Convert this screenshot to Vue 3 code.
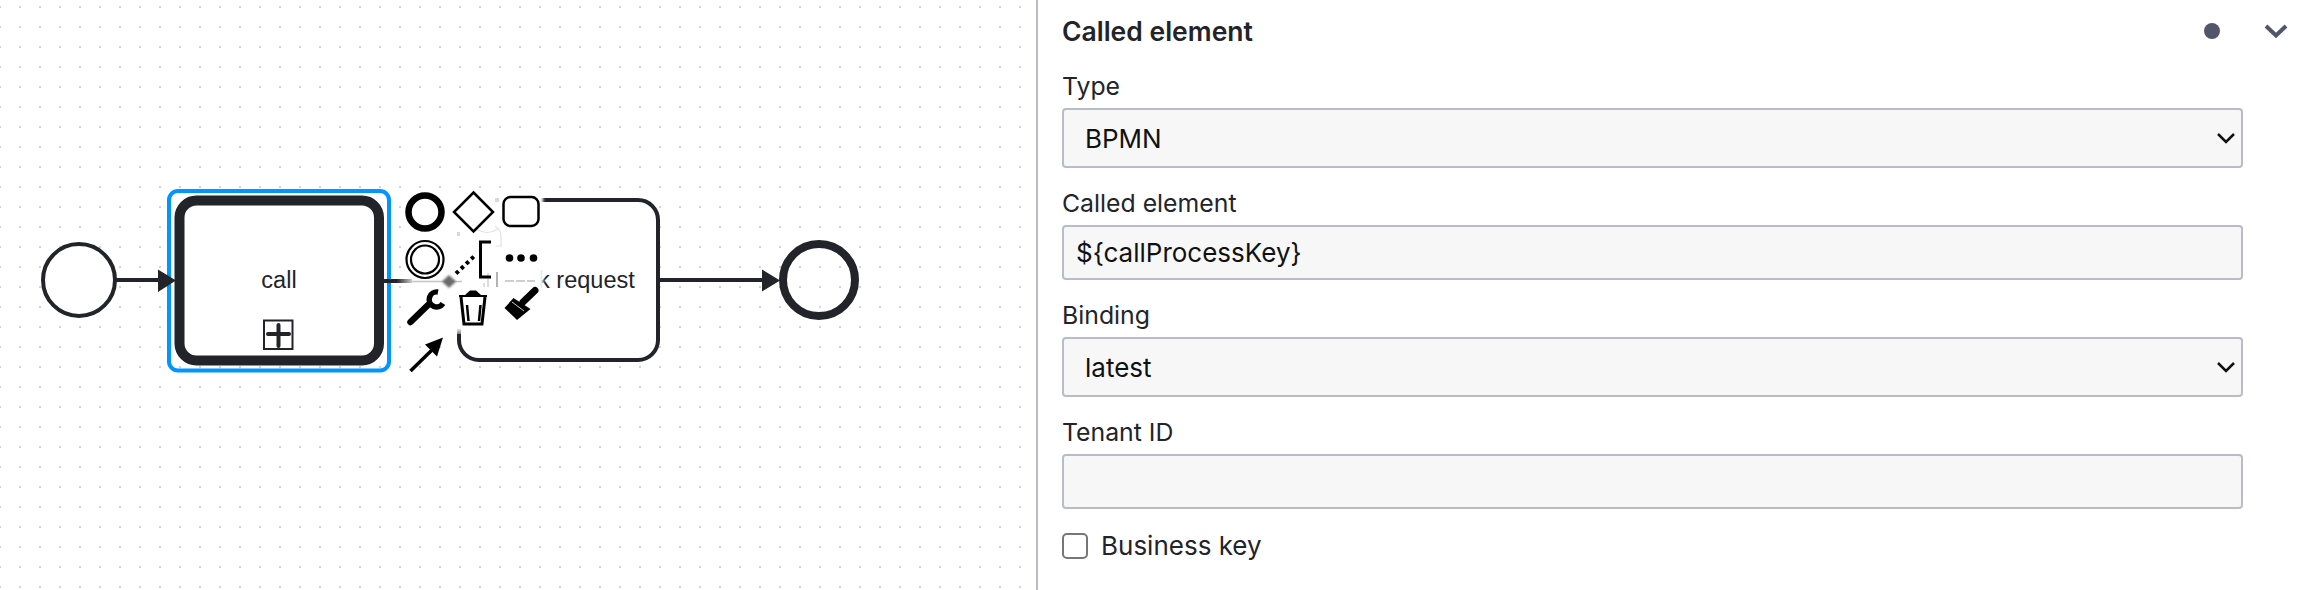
<script setup>
const fields = [
  { label: 'Type', value: 'BPMN', select: true },
  { label: 'Called element', value: '${callProcessKey}', select: false },
  { label: 'Binding', value: 'latest', select: true },
  { label: 'Tenant ID', value: '', select: false },
]
</script>

<template>
  <div class="page">
    <div class="canvas">
      <svg class="diagram" width="1036" height="590" viewBox="0 0 1036 590">
        <defs>
          <filter id="soft" x="-10%" y="-10%" width="120%" height="120%"><feGaussianBlur stdDeviation="1.5" /></filter>
          <filter id="softDot" x="-50%" y="-50%" width="200%" height="200%"><feGaussianBlur stdDeviation="0.9" /></filter>
          <linearGradient id="flowFade" gradientUnits="userSpaceOnUse" x1="384" y1="0" x2="412" y2="0">
            <stop offset="0" stop-color="#22242a" />
            <stop offset="0.45" stop-color="#22242a" />
            <stop offset="1" stop-color="#c8c8c8" />
          </linearGradient>
          <linearGradient id="sideFade" gradientUnits="userSpaceOnUse" x1="0" y1="328" x2="0" y2="338">
            <stop offset="0" stop-color="#22242a" stop-opacity="0" />
            <stop offset="1" stop-color="#22242a" />
          </linearGradient>
        </defs>

        <!-- start event -->
        <circle cx="79" cy="280" r="36" fill="#fff" stroke="#22242a" stroke-width="4" />

        <!-- selection outline -->
        <rect x="169" y="191" width="220" height="179.500" rx="9" fill="none" stroke="#0095ff" stroke-width="4" />

        <!-- call activity -->
        <rect x="179.500" y="200.500" width="199.500" height="160" rx="17" fill="#fff" stroke="#22242a" stroke-width="10" />
        <text x="279" y="288" class="label" text-anchor="middle">call</text>
        <rect x="264" y="320.500" width="28.500" height="28.500" fill="none" stroke="#22242a" stroke-width="2" />
        <path d="M268 334H289M278.500 325V346" stroke="#22242a" stroke-width="4" stroke-linecap="round" fill="none" />

        <!-- incoming flow sits over the selection outline -->
        <path d="M116 280H160" stroke="#22242a" stroke-width="4" fill="none" />
        <path d="M158 269.500L176 280.500L158 292Z" fill="#22242a" />

        <!-- check request activity, mostly under the context pad -->
        <rect x="459" y="200" width="199" height="160" rx="20" fill="#fff" stroke="#22242a" stroke-width="4" />
        <text x="559" y="288" class="label" text-anchor="middle">Check request</text>

        <!-- outgoing flow -->
        <path d="M660 280H764" stroke="#22242a" stroke-width="4" fill="none" />
        <path d="M762 269.500L780 280.500L762 291.500Z" fill="#22242a" />

        <!-- end event -->
        <circle cx="819" cy="280" r="36" fill="none" stroke="#22242a" stroke-width="8" />

        <!-- washed-out area behind the context pad -->
        <rect x="403" y="190" width="140" height="140" fill="#fff" filter="url(#soft)" />
        <rect x="456" y="326" width="6" height="8" fill="#fff" />
        <path d="M459 329V338" stroke="url(#sideFade)" stroke-width="4" fill="none" />
        <path d="M384 281H412" stroke="url(#flowFade)" stroke-width="4" fill="none" />
        <path d="M410 281.500H462" stroke="#c4c4c4" stroke-width="1.500" fill="none" />
        <path d="M449 275L456 281.500L449 288L442 281.500Z" fill="#6a6a6a" filter="url(#softDot)" />
        <path d="M505 281H535" stroke="#bdbdbd" stroke-width="1.500" stroke-dasharray="9 2" fill="none" />
        <path d="M497 272V287" stroke="#9a9a9a" stroke-width="1.500" fill="none" />
        <path d="M488 273V287M484 283V287" stroke="#d0d0d0" stroke-width="1.500" fill="none" />
        <path d="M476 229Q487 236 498 229M495 226Q501 230 501 236V246H496" stroke="#e2e2e2" stroke-width="1.200" fill="none" />
        <rect x="457" y="232" width="3" height="4" fill="#d8d8d8" />
        <rect x="495" y="198" width="4" height="4" fill="#d8d8d8" />

        <!-- context pad -->
        <circle cx="425" cy="212" r="16.500" fill="none" stroke="#000" stroke-width="6.500" />
        <path d="M473.500 192.500L493 212L473.500 231.500L454 212Z" fill="none" stroke="#000" stroke-width="2.500" />
        <rect x="503.500" y="197" width="35" height="29" rx="7" fill="none" stroke="#000" stroke-width="2.500" />
        <circle cx="425" cy="259.500" r="18.500" fill="none" stroke="#000" stroke-width="2.200" />
        <circle cx="425" cy="259.500" r="14" fill="none" stroke="#000" stroke-width="2.200" />
        <path d="M456 273.500L476 254.500" stroke="#000" stroke-width="4" stroke-dasharray="3.500 3.500" fill="none" />
        <path d="M491 242H480.500V277H491" stroke="#000" stroke-width="3" fill="none" />
        <circle cx="509.500" cy="258" r="3.800" fill="#000" />
        <circle cx="521" cy="258" r="3.800" fill="#000" />
        <circle cx="533.500" cy="258" r="3.800" fill="#000" />

        <path d="M410.500 322L428 305" stroke="#000" stroke-width="6.500" stroke-linecap="round" fill="none" />
        <path d="M438 292A7.500 7.500 0 1 0 443 303.500" stroke="#000" stroke-width="5.500" fill="none" />

        <path d="M459 296H487" stroke="#000" stroke-width="2" fill="none" />
        <path d="M465 295L470 290.500H476L481 295Z" fill="#000" />
        <path d="M461 297L464 324H482L485 297" stroke="#000" stroke-width="3" fill="none" />
        <path d="M467 305L468.500 321M480.500 305L479 321" stroke="#000" stroke-width="2.500" fill="none" />

        <path d="M535 290.500L523 302" stroke="#000" stroke-width="7" stroke-linecap="round" fill="none" />
        <path d="M513.500 298L530.500 309L517 320L504.500 308Z" fill="#000" />
        <path d="M512 302L524 311" stroke="#fff" stroke-width="0.800" fill="none" />

        <path d="M410.500 371L432 350" stroke="#000" stroke-width="3.500" fill="none" />
        <path d="M443 337.500L425 344.500L437 356.500Z" fill="#000" />
      </svg>
    </div>

    <aside class="panel">
      <header class="head">
        <span class="title">Called element</span>
        <span class="marks">
          <span class="dot"></span>
          <svg class="chev" width="24" height="14" viewBox="0 0 24 14"><path d="M2 2L12 11.500L22 2" fill="none" stroke="#52566b" stroke-width="4" /></svg>
        </span>
      </header>

      <div v-for="f in fields" :key="f.label" class="field">
        <div class="flabel">{{ f.label }}</div>
        <div class="control" :class="{ tall: f.select }">
          <span class="value" :class="{ pad: f.select }">{{ f.value }}</span>
          <svg v-if="f.select" width="18" height="11" viewBox="0 0 18 11"><path d="M1 1L9 9L17 1" fill="none" stroke="#111" stroke-width="2.500" /></svg>
        </div>
      </div>

      <label class="check">
        <span class="box"></span>
        <span>Business key</span>
      </label>
    </aside>
  </div>
</template>

<style scoped>
.page {
  display: flex;
  width: 2308px;
  height: 590px;
  background: #fff;
  overflow: hidden;
  font-family: Inter, "Noto Sans", sans-serif;
  color: #22242a;
}
.canvas {
  width: 1036px;
  flex: none;
  background-image: radial-gradient(circle at 1px 1px, #d4d4d4 1px, transparent 1.300px);
  background-size: 20px 20px;
  background-position: -1px 6px;
}
.diagram {
  display: block;
}
.label {
  font-family: "Liberation Sans", Arial, sans-serif;
  font-size: 23.500px;
  fill: #22242a;
}
.panel {
  flex: 1;
  border-left: 2px solid #b9bcc6;
  padding: 0 65px 0 24px;
}
.head {
  height: 62px;
  margin-bottom: 7px;
  display: flex;
  align-items: center;
  justify-content: space-between;
}
.title {
  font-size: 26.500px;
  font-weight: 600;
}
.marks {
  display: flex;
  align-items: center;
  gap: 44px;
  margin-right: -45px;
}
.dot {
  width: 16px;
  height: 16px;
  border-radius: 50%;
  background: #52566b;
}
.field {
  margin-bottom: 18px;
}
.flabel {
  font-size: 24.800px;
  line-height: 34px;
  margin-bottom: 5px;
}
.control {
  box-sizing: border-box;
  height: 55px;
  background: #f7f7f8;
  border: 2px solid #b9bcc6;
  border-radius: 4px;
  padding: 0 6px 0 12px;
  display: flex;
  align-items: center;
  justify-content: space-between;
  font-size: 26px;
  color: #111;
}
.control.tall {
  height: 60px;
}
.value.pad {
  padding-left: 9px;
}
.check {
  display: flex;
  align-items: center;
  gap: 13px;
  margin-top: 24px;
  font-size: 26px;
  height: 25px;
}
.box {
  box-sizing: border-box;
  width: 26px;
  height: 26px;
  border: 2px solid #767676;
  border-radius: 5px;
  background: #fff;
}
</style>
